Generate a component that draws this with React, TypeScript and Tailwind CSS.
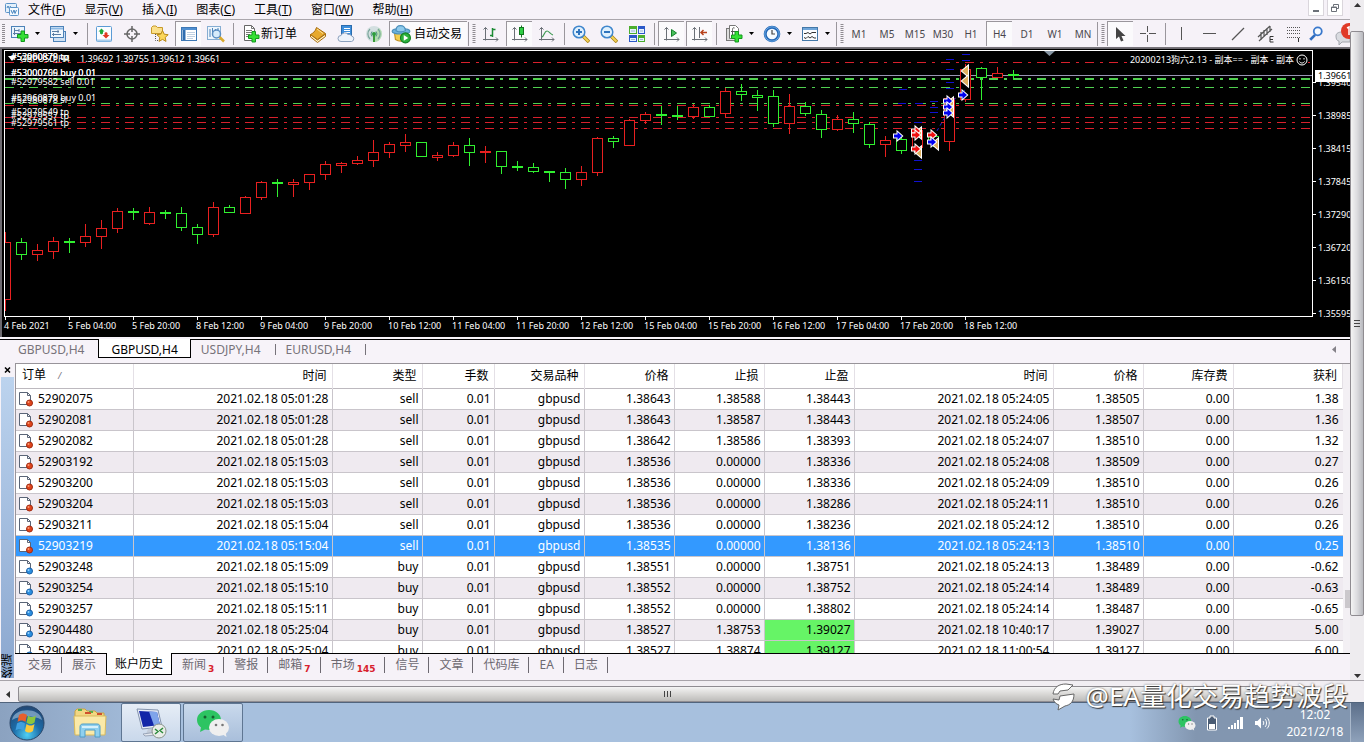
import React, { useState } from "react";

type Candle = [up: boolean, high: number, top: number, bottom: number, low: number];

const R = true;
const G = false;

// one candle every 16px, values are y positions on the chart
const candles: Candle[] = [
  [R, 232, 242, 299, 310],
  [G, 238, 242, 254, 259],
  [R, 244, 250, 254, 260],
  [R, 237, 241, 251, 258],
  [G, 238, 241, 242, 252],
  [R, 224, 236, 242, 246],
  [R, 220, 228, 236, 248],
  [R, 208, 211, 228, 232],
  [G, 208, 211, 212, 219],
  [R, 207, 212, 223, 224],
  [G, 210, 212, 213, 218],
  [G, 207, 213, 227, 230],
  [G, 224, 227, 234, 243],
  [R, 202, 207, 234, 236],
  [G, 205, 207, 212, 212],
  [R, 196, 197, 213, 213],
  [R, 181, 182, 197, 199],
  [G, 179, 182, 183, 196],
  [R, 179, 182, 184, 196],
  [R, 174, 174, 182, 189],
  [R, 161, 164, 174, 179],
  [R, 162, 163, 165, 172],
  [R, 156, 160, 163, 164],
  [R, 140, 152, 160, 166],
  [R, 142, 144, 152, 157],
  [R, 134, 142, 145, 151],
  [G, 142, 142, 156, 156],
  [R, 152, 155, 157, 160],
  [R, 142, 145, 155, 156],
  [G, 138, 145, 152, 165],
  [R, 146, 151, 152, 162],
  [G, 151, 151, 166, 173],
  [G, 161, 166, 167, 170],
  [G, 163, 167, 171, 172],
  [G, 171, 171, 172, 181],
  [G, 168, 172, 179, 188],
  [R, 166, 172, 179, 185],
  [R, 137, 138, 172, 175],
  [G, 136, 138, 141, 147],
  [R, 119, 120, 145, 145],
  [R, 112, 114, 120, 123],
  [G, 106, 114, 115, 124],
  [G, 106, 115, 116, 119],
  [R, 104, 107, 116, 118],
  [G, 105, 107, 116, 116],
  [R, 88, 91, 113, 117],
  [G, 84, 91, 94, 100],
  [G, 90, 95, 97, 110],
  [G, 90, 96, 123, 126],
  [R, 94, 106, 123, 133],
  [G, 102, 106, 113, 115],
  [G, 110, 114, 129, 137],
  [R, 115, 119, 129, 130],
  [G, 112, 119, 123, 132],
  [G, 122, 124, 144, 147],
  [R, 136, 140, 144, 156],
  [G, 137, 139, 150, 153],
  [R, 128, 130, 147, 150],
  [G, 132, 136, 142, 146],
  [R, 97, 98, 141, 150],
  [R, 64, 69, 99, 101],
  [G, 67, 68, 77, 99],
  [R, 67, 73, 77, 77],
  [G, 70, 74, 75, 79],
];

const orderLines = [
  { y: 62, color: "#d8202c", width: 1 },
  { y: 78, color: "#50d050", width: 2 },
  { y: 87, color: "#50d050", width: 1 },
  { y: 103, color: "#50d050", width: 1 },
  { y: 105, color: "#d8202c", width: 1 },
  { y: 117, color: "#d8202c", width: 1 },
  { y: 122, color: "#d8202c", width: 1 },
  { y: 128, color: "#d8202c", width: 1 },
];

const orderLabels = [
  { y: 60, text: "#52960879 tp" },
  { y: 60, text: "#53000878 tp" },
  { y: 76, text: "#53000709 buy 0.01" },
  { y: 76, text: "#53000766 buy 0.01" },
  { y: 85, text: "#52979582 sell 0.01" },
  { y: 101, text: "#52960879 buy 0.01" },
  { y: 103, text: "#52980878 sl" },
  { y: 115, text: "#52979549 tp" },
  { y: 119, text: "#52979557 tp" },
  { y: 126, text: "#52979561 tp" },
];

const blueDashes = [
  [899, 89], [915, 103], [914, 160], [914, 169], [914, 181], [930, 101], [930, 107], [930, 112],
  [946, 59], [946, 69], [946, 82], [946, 88], [962, 54], [962, 60], [898, 103], [914, 122],
];

const arrows: [number, number, string][] = [
  [898, 136, "#0000f0"],
  [916, 131, "#f01010"],
  [916, 135, "#f01010"],
  [916, 149, "#f01010"],
  [932, 135, "#f01010"],
  [932, 142, "#0000f0"],
  [948, 101, "#0000f0"],
  [948, 107, "#0000f0"],
  [948, 113, "#0000f0"],
  [963, 95, "#0000f0"],
];

const exits = [
  [917, 133], [917, 152], [934, 144], [949, 103], [949, 111], [964, 71], [964, 81],
];

const times = [
  "4 Feb 2021", "5 Feb 04:00", "5 Feb 20:00", "8 Feb 12:00", "9 Feb 04:00", "9 Feb 20:00", "10 Feb 12:00", "11 Feb 04:00",
  "11 Feb 20:00", "12 Feb 12:00", "15 Feb 04:00", "15 Feb 20:00", "16 Feb 12:00", "17 Feb 04:00", "17 Feb 20:00", "18 Feb 12:00",
];

const prices = ["1.39540", "1.38985", "1.38415", "1.37845", "1.37290", "1.36720", "1.36150", "1.35595"];

const menus = [
  ["文件", "F"], ["显示", "V"], ["插入", "I"], ["图表", "C"], ["工具", "T"], ["窗口", "W"], ["帮助", "H"],
];

const periods = ["M1", "M5", "M15", "M30", "H1", "H4", "D1", "W1", "MN"];

const columns = ["订单", "时间", "类型", "手数", "交易品种", "价格", "止损", "止盈", "时间", "价格", "库存费", "获利"];

const orders = [
  ["52902075", "05:01:28", "sell", "1.38643", "1.38588", "1.38443", "05:24:05", "1.38505", "1.38"],
  ["52902081", "05:01:28", "sell", "1.38643", "1.38587", "1.38443", "05:24:06", "1.38507", "1.36"],
  ["52902082", "05:01:28", "sell", "1.38642", "1.38586", "1.38393", "05:24:07", "1.38510", "1.32"],
  ["52903192", "05:15:03", "sell", "1.38536", "0.00000", "1.38336", "05:24:08", "1.38509", "0.27"],
  ["52903200", "05:15:03", "sell", "1.38536", "0.00000", "1.38336", "05:24:09", "1.38510", "0.26"],
  ["52903204", "05:15:03", "sell", "1.38536", "0.00000", "1.38286", "05:24:11", "1.38510", "0.26"],
  ["52903211", "05:15:04", "sell", "1.38536", "0.00000", "1.38236", "05:24:12", "1.38510", "0.26"],
  ["52903219", "05:15:04", "sell", "1.38535", "0.00000", "1.38136", "05:24:13", "1.38510", "0.25"],
  ["52903248", "05:15:09", "buy", "1.38551", "0.00000", "1.38751", "05:24:13", "1.38489", "-0.62"],
  ["52903254", "05:15:10", "buy", "1.38552", "0.00000", "1.38752", "05:24:14", "1.38489", "-0.63"],
  ["52903257", "05:15:11", "buy", "1.38552", "0.00000", "1.38802", "05:24:14", "1.38487", "-0.65"],
  ["52904480", "05:25:04", "buy", "1.38527", "1.38753", "1.39027", "10:40:17", "1.39027", "5.00"],
  ["52904483", "05:25:04", "buy", "1.38527", "1.38874", "1.39127", "11:00:54", "1.39127", "6.00"],
];

const terminalTabs = [
  { name: "交易" }, { name: "展示" }, { name: "账户历史" }, { name: "新闻", count: "3" }, { name: "警报" },
  { name: "邮箱", count: "7" }, { name: "市场", count: "145" }, { name: "信号" }, { name: "文章" },
  { name: "代码库" }, { name: "EA" }, { name: "日志" },
];

/* ---------- icons ---------- */

const Icon: React.FC<{ children: React.ReactNode; size?: number }> = ({ children, size = 18 }) => (
  <svg width={size} height={size} viewBox="0 0 18 18" fill="none" className="shrink-0" aria-hidden="true">
    {children}
  </svg>
);

const PlusMark = ({ x, y }: { x: number; y: number }) => (
  <path
    d={`M${x + 4} ${y + 0.5}h3.500v3.500h3.500v3.500h-3.500v3.500h-3.500v-3.500h-3.500v-3.500h3.500z`}
    fill="#34e034"
    stroke="#12981e"
  />
);

const AppIcon = () => (
  <svg width="15" height="15" viewBox="0 0 15 15" fill="none" className="shrink-0" aria-hidden="true">
    <rect x="0.500" y="1.500" width="11" height="9" rx="1" fill="#e4f0fb" stroke="#5d94c8" />
    <path d="M2 6l1-2 1.500 3 1-3" stroke="#4a86c0" />
    <rect x="4.500" y="5.500" width="9" height="8" rx="1" fill="#f4f9fe" stroke="#5d94c8" />
    <path d="M6 8l1.500 3.500 1.500-3.500 1 3.500 1.500-3.500" stroke="#4a86c0" />
  </svg>
);

const NewChartIcon = () => (
  <Icon>
    <rect x="0.500" y="1.500" width="13" height="11" fill="#eaf4fd" stroke="#4d82b8" />
    <path d="M3.500 3v7M2 8.500h9M3 5.500h5M8 4v3" stroke="#5a7da4" />
    <PlusMark x={6} y={5.5} />
  </Icon>
);

const ProfilesIcon = () => (
  <Icon>
    <rect x="4.500" y="6.500" width="12" height="10" fill="#cfe1f4" stroke="#4d82b8" />
    <rect x="1.500" y="1.500" width="13" height="11" fill="#f2f8fe" stroke="#4d82b8" />
    <path d="M2 3.500h12" stroke="#8cb9e4" strokeWidth="2" />
    <path d="M3 9.500h9M4.500 8v3M3 6.500h7M9 5v3" stroke="#5a7da4" />
  </Icon>
);

const MarketWatchIcon = () => (
  <Icon>
    <rect x="1.500" y="1.500" width="15" height="15" rx="1" fill="#fbfdff" stroke="#5b9bd5" />
    <path d="M2 15.500h14" stroke="#a9cdea" strokeWidth="2" />
    <path d="M6.500 3.500l3 3h-1.500v2l-1.500 1-1.500-1v-2h-1.500z" fill="#1fa83a" />
    <path d="M11 13.500l3.500-3.500h-2v-2l-1.500-1-1.500 1v2h-2z" fill="#e03a22" />
  </Icon>
);

const TargetIcon = () => (
  <Icon>
    <circle cx="9" cy="9" r="5" stroke="#666" strokeWidth="1.500" />
    <path d="M9 1v6M9 11v6M1 9h6M11 9h6" stroke="#666" strokeWidth="1.500" />
  </Icon>
);

const NavigatorIcon = () => (
  <Icon>
    <path d="M0.500 2.500l1.500-1.500h3l1.500 1.500h5v6h-11z" fill="#fbe08a" stroke="#c79a2a" />
    <path d="M4.500 9v6.500h4" stroke="#555" strokeDasharray="1 1" />
    <path d="M11.500 5.500l1.700 3.700 4 .500-3 2.700.800 4-3.500-2-3.500 2 .800-4-3-2.700 4-.500z" fill="#fcd75a" stroke="#b98a1a" />
  </Icon>
);

const TerminalIcon = () => (
  <Icon>
    <rect x="1.500" y="2.500" width="15" height="13" fill="#fff" stroke="#3e78b4" />
    <path d="M2 4h14" stroke="#4f8fd0" strokeWidth="2" />
    <path d="M4 5v10" stroke="#2f6db0" strokeWidth="3" />
    <path d="M7 7.500h8M7 9.500h8M7 11.500h8M7 13.500h6" stroke="#bfd0e2" />
  </Icon>
);

const TesterIcon = () => (
  <Icon>
    <rect x="0.500" y="1.500" width="13" height="13" fill="#eef6fd" stroke="#86add2" />
    <path d="M3 4v8M5.500 3v6M8.500 4v3M11 3v5" stroke="#4d82b8" />
    <path d="M12.500 12l4.500 4.500" stroke="#d9a92c" strokeWidth="2.500" />
    <circle cx="9.500" cy="9" r="4" fill="#d6ebfb" stroke="#5a8ec2" strokeWidth="1.500" />
  </Icon>
);

const NewOrderIcon = () => (
  <Icon>
    <path d="M2.500 0.500h7l3 3v12h-10z" fill="#fff" stroke="#666" />
    <path d="M9.500 0.500v3h3M4 5.500h6M4 7.500h6M4 9.500h4M4 11.500h3" stroke="#777" />
    <PlusMark x={6} y={6} />
  </Icon>
);

const BookIcon = () => (
  <Icon>
    <path d="M1.500 9.500l7 5.500 8-6v2.500l-8 6-7-5.500z" fill="#fff3c4" stroke="#a86d10" />
    <path d="M7.500 2.500l9 6-8 6-7-5c2-1 5-3 6-7z" fill="#e7a92c" stroke="#a86d10" />
    <path d="M8 4l6 4.500" stroke="#fbe09a" />
  </Icon>
);

const CloudIcon = () => (
  <Icon>
    <rect x="4.500" y="0.500" width="10" height="10" fill="#3d8fdc" stroke="#2b6cae" />
    <path d="M7 3.500h6M7 5.500h6M7 7.500h6" stroke="#fff" />
    <path d="M4 16.500a3 3 0 010-6 4 4 0 017-1 3 3 0 013.500 1.500 2.800 2.800 0 010 5.500z" fill="#eef3fa" stroke="#8ba0bd" />
  </Icon>
);

const SignalsIcon = () => (
  <Icon>
    <circle cx="9" cy="9" r="8" fill="#d3dfe0" />
    <path d="M9 9v8a8 8 0 005-14" fill="#b3ddb0" />
    <path d="M5 4a7 7 0 000 10M13 4a7 7 0 010 10" stroke="#7aa59b" strokeWidth="1.200" />
    <path d="M7 6.500a4 4 0 000 5M11 6.500a4 4 0 010 5" stroke="#559184" />
    <path d="M9 9v8" stroke="#3a9c3a" strokeWidth="2" />
    <circle cx="9" cy="9" r="2" fill="#2f9e3f" />
  </Icon>
);

const AutoTradeIcon = () => (
  <Icon size={20}>
    <path d="M3 7l1 7c3 2 7 2 9 0l2-7z" fill="#f5cf4d" stroke="#bf9024" />
    <ellipse cx="9" cy="6.500" rx="8" ry="2.500" fill="#6fb4dc" stroke="#4a8fbb" />
    <path d="M4.500 6c0-6 8-6 8.500 0-2 1.500-6 1.500-8.500 0z" fill="#8ecbec" stroke="#4a8fbb" />
    <circle cx="13" cy="12.500" r="4.500" fill="#2bb13b" stroke="#138024" />
    <path d="M11.500 10l4 2.500-4 2.500z" fill="#fff" />
  </Icon>
);

const Axes = () => (
  <path d="M3.500 2.500v13M1 14.500h15M1.500 4.500l2-2 2 2M14 12.500l2 2-2 2" stroke="#6a6f76" />
);

const BarChartIcon = () => (
  <Icon>
    <Axes />
    <path d="M10.500 3v9M10.500 4.500h3M8 10.500h2.500" stroke="#1d8a34" strokeWidth="1.500" />
  </Icon>
);

const CandleChartIcon = () => (
  <Icon>
    <Axes />
    <path d="M10.500 0.500v12" stroke="#12761f" />
    <rect x="8.500" y="2.500" width="4" height="7" fill="#2fce45" stroke="#12761f" />
  </Icon>
);

const LineChartIcon = () => (
  <Icon>
    <Axes />
    <path d="M4 12c2-1 2.500-6 5-6 2 0 3 3 6 4" stroke="#3f9a54" strokeWidth="1.200" />
  </Icon>
);

const ZoomIcon = ({ plus }: { plus?: boolean }) => (
  <Icon>
    <path d="M11 11l6 6" stroke="#a98114" strokeWidth="3.500" />
    <path d="M11 11l5.500 5.500" stroke="#f3d255" strokeWidth="2" />
    <circle cx="7" cy="7" r="5.800" fill="#dff0fd" stroke="#3f86cc" strokeWidth="1.500" />
    <path d={plus ? "M7 4v6M4 7h6" : "M4 7h6"} stroke="#2f74bd" strokeWidth="2" />
  </Icon>
);

const TileIcon = () => (
  <Icon>
    <rect x="1" y="1" width="8" height="8" fill="#4cae2e" />
    <rect x="10" y="1" width="7" height="8" fill="#2b58c8" />
    <rect x="1" y="10" width="8" height="7" fill="#2b58c8" />
    <rect x="10" y="10" width="7" height="7" fill="#4cae2e" />
    <path d="M2 4h6v4H2zM11 4h5v4h-5zM2 13h6v3H2zM11 13h5v3h-5z" fill="#e6f3ff" />
    <path d="M3 6h4M12 6h3M3 14.500h4M12 14.500h3" stroke="#9db6d4" />
  </Icon>
);

const AutoScrollIcon = () => (
  <Icon>
    <Axes />
    <path d="M8.500 4.500l5 3.500-5 3.500z" fill="#49c05c" stroke="#15802a" />
  </Icon>
);

const ShiftIcon = () => (
  <Icon>
    <Axes />
    <path d="M8.500 2v11" stroke="#6a6f76" />
    <path d="M16 7.500h-6M12.500 5l-2.500 2.500 2.500 2.500" stroke="#b8421c" strokeWidth="1.500" />
  </Icon>
);

const IndicatorsIcon = () => (
  <Icon>
    <rect x="1.500" y="3.500" width="9" height="12" fill="#ddd" stroke="#777" />
    <path d="M4.500 0.500h6l3 3v10h-9z" fill="#fff" stroke="#777" />
    <path d="M9.500 3c-2-1-2 1-2 3v5M6 6.500h4" stroke="#555" />
    <PlusMark x={6} y={6} />
  </Icon>
);

const ClockIcon = () => (
  <Icon>
    <circle cx="9" cy="9" r="6.800" fill="#f4faff" stroke="#2468b8" strokeWidth="3" />
    <circle cx="9" cy="9" r="7.200" stroke="#6aa8e2" />
    <path d="M9 5V9h3" stroke="#444" strokeWidth="1.200" />
  </Icon>
);

const TemplateIcon = () => (
  <Icon>
    <rect x="1.500" y="2.500" width="15" height="13" fill="#fbfdff" stroke="#4478a8" />
    <path d="M2 4h14" stroke="#6fa6da" strokeWidth="2" />
    <path d="M3 8.500h2l2-1 2 1.500 2-1.500h4M3 12.500l2 1 2-2 2 1.500 2-1.500 2 1.500h2" stroke="#333" />
  </Icon>
);

const CursorIcon = () => (
  <Icon>
    <path d="M4 2v12l3-2.500 2 5 2.500-1-2-4.500h4z" fill="#444" />
  </Icon>
);

const CrossIcon = () => (
  <Icon>
    <path d="M8.500 1v6M8.500 10v7M1 8.500h6M10 8.500h7" stroke="#555" />
  </Icon>
);

const ChannelIcon = () => (
  <Icon>
    <path d="M1 12L13 1M2 16L15 4M4 7v8M7 5v7M10 3v7M13 1v6" stroke="#555" strokeWidth="1.200" />
    <path d="M16.500 11.500h-3.500v5.500h3.500M13 14.500h3" stroke="#333" />
  </Icon>
);

const FiboIcon = () => (
  <Icon>
    <path d="M2 2.500h13M2 5.500h13M2 8.500h13M2 12.500h13" stroke="#555" strokeDasharray="1 1" />
    <path d="M13.500 13v4" stroke="#333" />
  </Icon>
);

const SearchIcon = () => (
  <Icon size={16}>
    <path d="M8 10l-5.500 5.500" stroke="#2f6dc0" strokeWidth="3" />
    <circle cx="11" cy="6" r="4.500" fill="#f5faff" stroke="#3a78cc" strokeWidth="2" />
  </Icon>
);

const OrderIcon = ({ sell }: { sell: boolean }) => (
  <svg width="15" height="16" viewBox="0 0 15 16" fill="none" className="shrink-0" aria-hidden="true">
    <path d="M0.500 1.500h8l3 3v9h-11z" fill="#fff" stroke="#5a6577" />
    <path d="M8.500 1.500v3h3" stroke="#5a6577" />
    <circle cx="10.500" cy="12" r="3" fill={sell ? "#e0451c" : "#2b8fe0"} stroke={sell ? "#a02a10" : "#1b60a8"} />
    <circle cx="9.500" cy="11" r="1" fill={sell ? "#ff9a70" : "#9ad4ff"} />
  </svg>
);

const WeChatIcon = ({ size }: { size: number }) => (
  <svg width={size} height={size} viewBox="0 0 34 34" fill="none" aria-hidden="true">
    <path d="M13 4C6 4 1 8.500 1 14c0 3 1.500 5.500 4 7.500L4 26l5-2.500c9 2 16-2.500 16-9.500 0-5.500-5-10-12-10z" fill="#2dc462" />
    <ellipse cx="23" cy="21.500" rx="10" ry="8.500" fill="#efefef" />
    <path d="M26 28l4.500 3-1-5z" fill="#efefef" />
    <circle cx="9" cy="11" r="1.500" fill="#17602f" />
    <circle cx="17" cy="11" r="1.500" fill="#17602f" />
    <circle cx="20" cy="19" r="1.300" fill="#777" />
    <circle cx="26.500" cy="19" r="1.300" fill="#777" />
  </svg>
);

/* ---------- toolbar pieces ---------- */

const Tool: React.FC<{ label: string; on?: boolean; children: React.ReactNode }> = ({ label, on, children }) => (
  <button aria-label={label} className="flex h-[26px] w-7 shrink-0 items-center justify-center">
    <span
      className={
        on
          ? "flex h-[25px] w-[26px] items-center justify-center border-l border-t border-[#9a969c] bg-[#fbfafc]"
          : "flex h-[25px] w-[26px] items-center justify-center"
      }
    >
      {children}
    </span>
  </button>
);

const DropTool: React.FC<{ label: string; children: React.ReactNode }> = ({ label, children }) => (
  <button aria-label={label} className="flex h-[26px] w-[38px] shrink-0 items-center gap-1.5 pl-[3px]">
    {children}
    <svg width="5" height="3" viewBox="0 0 5 3" aria-hidden="true">
      <path d="M0 0h5L2.500 3z" fill="#000" />
    </svg>
  </button>
);

const Sep = () => (
  <div className="flex h-[22px] w-1.5 shrink-0 justify-center">
    <div className="w-px bg-[#9a969c]" />
  </div>
);

const Grip = () => (
  <div className="flex h-6 w-[9px] shrink-0 items-center gap-[3px] border-l border-[#9a969c]">
    <svg width="8" height="20" viewBox="0 0 8 20" aria-hidden="true">
      <path d="M5 0v20" stroke="#8f8b91" strokeWidth="3" strokeDasharray="1 1" />
    </svg>
  </div>
);

const Toolbar = () => (
  <div className="flex h-7 items-center overflow-hidden border-b border-[#77747a] bg-[#f6f2f8]">
    <div className="flex h-6 w-2 shrink-0 items-center">
      <svg width="8" height="20" viewBox="0 0 8 20" aria-hidden="true">
        <path d="M3.500 0v20" stroke="#8f8b91" strokeWidth="3" strokeDasharray="1 1" />
      </svg>
    </div>
    <DropTool label="新图表"><NewChartIcon /></DropTool>
    <DropTool label="图表组合"><ProfilesIcon /></DropTool>
    <Sep />
    <Tool label="市场报价"><MarketWatchIcon /></Tool>
    <Tool label="数据窗口"><TargetIcon /></Tool>
    <Tool label="导航"><NavigatorIcon /></Tool>
    <Tool label="终端" on><TerminalIcon /></Tool>
    <Tool label="策略测试"><TesterIcon /></Tool>
    <Sep />
    <button className="flex h-[26px] w-[68px] shrink-0 items-center gap-px pl-1.5 whitespace-nowrap">
      <NewOrderIcon />
      新订单
    </button>
    <Tool label="MetaEditor"><BookIcon /></Tool>
    <Tool label="VPS"><CloudIcon /></Tool>
    <Tool label="信号"><SignalsIcon /></Tool>
    <button className="mx-px flex h-[25px] w-[78px] shrink-0 items-center gap-[3px] border-l border-t border-[#9a969c] bg-[#fbfafc] pl-px whitespace-nowrap">
      <AutoTradeIcon />
      自动交易
    </button>
    <Grip />
    <Tool label="柱状图"><BarChartIcon /></Tool>
    <Tool label="蜡烛图" on><CandleChartIcon /></Tool>
    <Tool label="折线图"><LineChartIcon /></Tool>
    <Sep />
    <Tool label="放大"><ZoomIcon plus /></Tool>
    <Tool label="缩小"><ZoomIcon /></Tool>
    <Tool label="平铺窗口"><TileIcon /></Tool>
    <Sep />
    <Tool label="自动滚动" on><AutoScrollIcon /></Tool>
    <Tool label="图表平移" on><ShiftIcon /></Tool>
    <Sep />
    <div className="flex shrink-0 pl-[3px]">
      <DropTool label="指标"><IndicatorsIcon /></DropTool>
      <DropTool label="时间周期"><ClockIcon /></DropTool>
      <DropTool label="模板"><TemplateIcon /></DropTool>
    </div>
    <Grip />
    {periods.map((p) => (
      <Tool key={p} label={p} on={p === "H4"}>
        <span className="text-[10px] leading-3 text-[#4a474d]">{p}</span>
      </Tool>
    ))}
    <Grip />
    <Tool label="光标" on><CursorIcon /></Tool>
    <Tool label="十字线"><CrossIcon /></Tool>
    <Sep />
    <Tool label="垂直线"><Icon><path d="M8.500 2v13" stroke="#555" /></Icon></Tool>
    <Tool label="水平线"><Icon><path d="M2 8.500h13" stroke="#555" /></Icon></Tool>
    <Tool label="趋势线"><Icon><path d="M3 15L15 3" stroke="#555" strokeWidth="1.200" /></Icon></Tool>
    <Tool label="通道"><ChannelIcon /></Tool>
    <Tool label="斐波那契"><FiboIcon /></Tool>
    <button aria-label="搜索" className="flex w-5 shrink-0 items-center"><SearchIcon /></button>
    <button aria-label="通知" className="ml-auto shrink-0">
      <svg width="16" height="24" viewBox="0 0 16 24" aria-hidden="true">
        <path d="M2 14c0-3 3-4 6-4h8v10H8l-3 3v-4c-2 0-3-2-3-5z" fill="#d9dbe0" stroke="#a4a7ae" />
        <circle cx="15" cy="9" r="8" fill="#e03a28" />
        <path d="M13 6l2-1v8" stroke="#fff" strokeWidth="1.500" fill="none" />
      </svg>
    </button>
  </div>
);

/* ---------- chart ---------- */

const Chart = () => (
  <div className="relative flex h-[289px] shrink-0 overflow-hidden border-l-2 border-t border-[#6d6a70] bg-black pl-0.5 pt-px text-[9px] leading-3 text-white">
    <div className="flex min-w-0 flex-1 flex-col">
      <div className="h-[267px] border border-white">
        <svg width="100%" height="100%" className="block overflow-hidden">
          <g transform="translate(-5 -51)" shapeRendering="crispEdges">
            {orderLines.map((l) => (
              <line key={l.y} x1="5" x2="110%" y1={l.y + l.width / 2} y2={l.y + l.width / 2} stroke={l.color} strokeWidth={l.width} strokeDasharray="9 6 3 6" />
            ))}
            <line x1="5" x2="110%" y1="75.5" y2="75.5" stroke="#9a94b4" />
            {blueDashes.map(([x, y]) => (
              <rect key={`${x}-${y}`} x={x} y={y} width="8" height="1" fill="#1010d0" />
            ))}
            {candles.map(([up, high, top, bottom, low], i) => {
              const x = 5 + i * 16;
              const color = up ? "#e82020" : "#30f030";
              return (
                <g key={i}>
                  <rect x={x} y={high} width="1" height={low - high + 1} fill={color} />
                  <rect x={x - 4.5} y={top + 0.5} width="10" height={bottom - top} fill="#000" stroke={color} />
                </g>
              );
            })}
          </g>
          <g transform="translate(-5 -51)">
            <path d="M934 136L948 112M949 104L965 90" stroke="#2020e0" strokeDasharray="3 3" />
            {exits.map(([x, y]) => (
              <path key={`${x}-${y}`} d={`M${x - 2} ${y}l6-5v10z`} fill="#dfb060" stroke="#fff" strokeWidth="2" paintOrder="stroke" />
            ))}
            {arrows.map(([x, y, color]) => (
              <path key={`${x}-${y}`} d={`M${x - 4} ${y - 1.5}h3.500v-2.500l4.500 4-4.500 4v-2.500h-3.500z`} fill={color} stroke="#fff" strokeWidth="2" paintOrder="stroke" />
            ))}
            <path d="M1044 51h11l-5.500 5z" fill="#8796a4" />
            <path d="M8 56h8l-4 5z" fill="#fff" />
            <g fill="#fff">
              {orderLabels.map((l) => (
                <text key={l.text} x="11" y={l.y}>{l.text}</text>
              ))}
              <text x="20" y="62">GBPUSD,H4</text>
              <text x="80" y="62">1.39692 1.39755 1.39612 1.39661</text>
            </g>
          </g>
        </svg>
      </div>
      <div className="flex">
        {times.map((t) => (
          <div key={t} className="w-16 shrink-0 whitespace-nowrap">
            <div className="ml-px h-[3px] w-px bg-white" />
            {t}
          </div>
        ))}
      </div>
    </div>
    <div className="flex w-[37px] shrink-0 flex-col overflow-hidden pt-4">
      {prices.map((p) => (
        <div key={p} className="flex h-[33px] shrink-0 items-center gap-0.5">
          <span className="h-px w-[3px] shrink-0 bg-white" />
          {p}
        </div>
      ))}
    </div>
    <span className="absolute right-0 top-[21px] w-[35px] overflow-hidden bg-white pl-[3px] text-black">1.39661</span>
    <div className="absolute right-[42px] top-[5px] flex items-center gap-0.5 bg-black whitespace-nowrap">
      20200213狗六2.13 - 副本== - 副本 - 副本
      <svg width="12" height="12" viewBox="0 0 12 12" fill="none" stroke="#fff" aria-hidden="true">
        <circle cx="6" cy="6" r="5" />
        <path d="M3.500 7.500c1 2 4 2 5 0M4 4v1.500M8 4v1.500" />
      </svg>
    </div>
  </div>
);

const ChartTabs = () => (
  <div className="h-[26px] shrink-0 bg-[#f7f3f9] pt-0.5">
    <nav className="flex h-5 border-t border-black pl-2 text-[#77737a]">
      <button className="pl-2.5 pr-3.5">GBPUSD,H4</button>
      <button className="-mt-px h-[19px] border border-t-0 border-black bg-white px-3 pt-1 leading-3 text-black">GBPUSD,H4</button>
      <button className="my-1 border-r border-[#77737a] pl-2.5 pr-3.5 leading-3">USDJPY,H4</button>
      <button className="my-1 border-r border-[#77737a] pl-2.5 pr-3.5 leading-3">EURUSD,H4</button>
      <svg width="4" height="7" viewBox="0 0 4 7" className="ml-auto mr-3.5 mt-1.5" aria-hidden="true">
        <path d="M4 0v7L0 3.500z" fill="#858189" />
      </svg>
    </nav>
  </div>
);

/* ---------- terminal ---------- */

const History = () => {
  const [selected, setSelected] = useState("52903219");

  return (
    <table className="w-full table-fixed border-collapse whitespace-nowrap">
      <colgroup>
        <col className="w-[117px]" />
        <col className="w-[199px]" />
        <col className="w-[90px]" />
        <col className="w-[72px]" />
        <col className="w-[90px]" />
        <col className="w-[90px]" />
        <col className="w-[90px]" />
        <col className="w-[90px]" />
        <col className="w-[199px]" />
        <col className="w-[90px]" />
        <col className="w-[90px]" />
        <col />
      </colgroup>
      <thead>
        <tr className="h-6 border-b border-[#bdb9bf]">
          {columns.map((c, i) => (
            <th
              key={i}
              scope="col"
              className={i === 0 ? "border-r border-[#e4e0e6] pl-1.5 text-left font-normal" : "border-r border-[#e4e0e6] pr-[5px] text-right font-normal"}
            >
              {c}
              {i === 0 && <span className="pl-3 text-[9px] text-[#77737a] italic">/</span>}
            </th>
          ))}
        </tr>
      </thead>
      <tbody>
        {orders.map(([id, opened, type, price, sl, tp, closed, closePrice, profit]) => {
          const hitTp = tp === closePrice;
          const cells = [`2021.02.18 ${opened}`, type, "0.01", "gbpusd", price, sl, tp, `2021.02.18 ${closed}`, closePrice, "0.00", profit];
          return (
            <tr
              key={id}
              onClick={() => setSelected(id)}
              className={
                id === selected
                  ? "h-[21px] border-b border-[#c9c5cb] bg-[#3399ff] text-white"
                  : "h-[21px] border-b border-[#c9c5cb] odd:bg-white even:bg-[#efeaf0]"
              }
            >
              <td className="border-r border-[#c9c5cb] pl-[3px]">
                <div className="flex items-center gap-1">
                  <OrderIcon sell={type === "sell"} />
                  {id}
                </div>
              </td>
              {cells.map((c, i) => (
                <td
                  key={i}
                  className={
                    i === 6 && hitTp
                      ? "border-r border-[#c9c5cb] bg-[#66f466] pr-[3px] text-right"
                      : i === 10
                        ? "pr-1 text-right"
                        : "border-r border-[#c9c5cb] pr-[3px] text-right"
                  }
                >
                  {c}
                </td>
              ))}
            </tr>
          );
        })}
      </tbody>
    </table>
  );
};

const Terminal = () => {
  const [tab, setTab] = useState("账户历史");

  return (
    <section className="flex min-h-0 flex-1 bg-[#f6f2f8]">
      <div className="flex w-[15px] shrink-0 flex-col items-center pb-0.5">
        <button aria-label="关闭" className="flex h-3.5 items-center">
          <svg width="7" height="6" viewBox="0 0 7 6" aria-hidden="true">
            <path d="M1 0.500l5 5M6 0.500l-5 5" stroke="#000" strokeWidth="1.500" />
          </svg>
        </button>
        <div className="flex w-[13px] flex-1 items-end justify-center bg-linear-to-b from-[#bcd3ee] to-[#8ba7cf]">
          <span className="rotate-180 text-[12px] leading-[13px] [writing-mode:vertical-rl]">终端</span>
        </div>
      </div>
      <div className="flex min-w-0 flex-1 flex-col">
        <div className="flex min-h-0 flex-1 overflow-hidden border-l border-t border-[#98949a]">
          <div className="min-w-0 flex-1 overflow-hidden bg-white">
            <History />
          </div>
          <div className="flex w-[7px] shrink-0 flex-col bg-[#f3f0f4]">
            <div className="flex-[226]" />
            <div className="ml-0.5 flex-[18] bg-[#cbc8cc]" />
            <div className="flex-[45]" />
          </div>
        </div>
        <nav className="flex h-[27px] shrink-0 border-t border-black pl-[3px] text-[#6d6971]">
          {terminalTabs.map(({ name, count }) => (
            <button
              key={name}
              onClick={() => setTab(name)}
              className={
                name === tab
                  ? "-mt-px h-[22px] border border-t-0 border-black bg-white px-2 leading-5 text-black"
                  : name === "展示"
                    ? "mt-[3px] h-4 px-2.5 leading-4"
                    : "mt-[3px] flex h-4 border-r border-[#6d6971] pl-2.5 pr-[9px] leading-4"
              }
            >
              {name}
              {count && <span className="pl-0.5 pt-1.5 font-['DejaVu_Sans'] text-[9px] leading-3 font-bold text-[#d8202c]">{count}</span>}
            </button>
          ))}
        </nav>
      </div>
    </section>
  );
};

/* ---------- frame scroll bars ---------- */

const VerticalScroll = () => (
  <div className="flex w-3.5 shrink-0 flex-col items-center bg-[#eeecef]">
    <svg width="14" height="10" viewBox="0 0 14 10" aria-hidden="true">
      <path d="M4 7h7L7.500 3z" fill="#333" />
    </svg>
    <div className="h-[21px]" />
    <div className="flex w-full flex-[585] flex-col items-center justify-center gap-0.5 rounded-xs border border-[#8f8c91] bg-linear-to-r from-[#f4f4f4] via-[#dcdcdf] to-[#b9babf]">
      <div className="h-px w-1.5 bg-[#444]" />
      <div className="h-px w-1.5 bg-[#444]" />
      <div className="h-px w-1.5 bg-[#444]" />
    </div>
    <div className="flex-[54]" />
    <svg width="14" height="10" viewBox="0 0 14 10" aria-hidden="true">
      <path d="M4 4h7L7.500 8z" fill="#333" />
    </svg>
  </div>
);

const HorizontalScroll = () => (
  <div className="flex h-[22px] shrink-0 items-end border-t border-[#a7a3a9] bg-[#f1eef2]">
    <svg width="18" height="15" viewBox="0 0 18 15" className="shrink-0" aria-hidden="true">
      <path d="M10 4v7L6 7.500z" fill="#333" />
    </svg>
    <div className="flex h-4 flex-1 items-center justify-center gap-0.5 rounded-xs border border-[#8f8c91] bg-linear-to-b from-[#f4f4f4] via-[#d9d8d6] to-[#bdbcba]">
      <div className="h-1.5 w-px bg-[#444]" />
      <div className="h-1.5 w-px bg-[#444]" />
      <div className="h-1.5 w-px bg-[#444]" />
    </div>
    <div className="w-12 shrink-0" />
  </div>
);

/* ---------- taskbar ---------- */

const StartOrb = () => (
  <svg width="36" height="36" viewBox="0 0 36 36" aria-hidden="true">
    <defs>
      <radialGradient id="orb" cx="50%" cy="85%" r="80%">
        <stop offset="0" stopColor="#4fd0f4" />
        <stop offset="0.5" stopColor="#1c6ca8" />
        <stop offset="1" stopColor="#224a78" />
      </radialGradient>
    </defs>
    <circle cx="18" cy="18" r="17" fill="url(#orb)" stroke="#2a4668" />
    <path d="M3 15C5 2 31 2 33 15c-9-5-21-5-30 0z" fill="#a8c4de" opacity="0.6" />
    <path d="M10 10c3-2 5-2 8 0l-1.500 7c-3-2-5-2-8 0z" fill="#e8602c" />
    <path d="M19 10.500c3 2 5 2 8 0l-1.500 7c-3 2-5 2-8 0z" fill="#8cc63e" />
    <path d="M8 18.500c3-2 5-2 8 0l-1.500 7c-3-2-5-2-8 0z" fill="#3f9fe0" />
    <path d="M17.500 19c3 2 5 2 8 0l-1.500 7c-3 2-5 2-8 0z" fill="#fbc93c" />
  </svg>
);

const ExplorerIcon = () => (
  <svg width="34" height="32" viewBox="0 0 34 32" fill="none" aria-hidden="true">
    <path d="M2 4l2-2h8l2 2h8l2 2h7v20H2z" fill="#f2d782" stroke="#c9a544" />
    <path d="M5 3h4M16 5h4M24 7h4" stroke="#58b04a" strokeWidth="2" />
    <path d="M12 6h6M24 7h5" stroke="#d0502c" strokeWidth="2" />
    <path d="M1 9h32l-1 19H2z" fill="#fae9a8" stroke="#d8b95c" />
    <path d="M7 30V20c0-2 1-3 3-3h14c2 0 3 1 3 3v10h-5v-7H12v7z" fill="#8fd0ee" stroke="#4d9cc8" />
    <path d="M9 20h16" stroke="#d5f0fc" strokeWidth="2" />
  </svg>
);

const RemoteIcon = () => (
  <svg width="34" height="32" viewBox="0 0 34 32" fill="none" aria-hidden="true">
    <path d="M3 2l21 1 4 17-20 2z" fill="#e8eef8" stroke="#8393ad" />
    <path d="M5 4l18 1 3 13-17 2z" fill="#1226a8" />
    <path d="M15 4.500l8 .500 3 13-6 .500z" fill="#7fa4ea" />
    <path d="M14 22l8-1 2 4-12 2z" fill="#c3cbd8" />
    <path d="M9 27l14-2v3l-12 1z" fill="#e3e7ee" stroke="#9aa5b8" />
    <circle cx="25" cy="24" r="7" fill="#e9ede8" stroke="#8b948c" />
    <path d="M21 22l3 2.500-3 2.500M29 21l-3 2.500 3 2.500" stroke="#2b8a3a" strokeWidth="1.500" />
  </svg>
);

const Taskbar = () => (
  <footer className="flex h-10 shrink-0 items-center border-t border-[#51647c] bg-linear-to-r from-[#8ba2c0] via-[#a7c0de] via-12% to-[#a7c0de]">
    <button aria-label="开始" className="ml-[9px] shrink-0"><StartOrb /></button>
    <button aria-label="资源管理器" className="ml-7 shrink-0"><ExplorerIcon /></button>
    <button aria-label="远程桌面" className="ml-3.5 flex h-[39px] w-[60px] shrink-0 items-center justify-center rounded-xs border border-[#5f7692] bg-linear-to-b from-[#e6edf6] to-[#c9d8eb]">
      <RemoteIcon />
    </button>
    <button aria-label="微信" className="ml-0.5 flex h-[39px] w-[60px] shrink-0 items-center justify-center rounded-xs border border-[#5f7692] bg-linear-to-b from-[#c9d9ec] to-[#a9bfdb]">
      <WeChatIcon size={34} />
    </button>
    <div className="ml-auto flex h-full items-center gap-2.5 bg-linear-to-r from-transparent via-[#8296b0] via-30% to-[#8296b0] pl-12 text-white">
      <WeChatIcon size={18} />
      <svg width="12" height="16" viewBox="0 0 12 16" fill="none" aria-hidden="true">
        <path d="M4 1h4v2h2.500v12h-9V3H4z" fill="#4a5c74" stroke="#fff" />
        <path d="M3 9h6v5H3z" fill="#fff" />
      </svg>
      <svg width="16" height="14" viewBox="0 0 16 14" aria-hidden="true">
        <path d="M0 11h2v2H0zM3 9h2v4H3zM6 7h2v6H6zM9 4h2v9H9zM12 1h3v12h-3z" fill="#fff" />
      </svg>
      <svg width="16" height="14" viewBox="0 0 16 14" fill="none" aria-hidden="true">
        <path d="M1 5h2.500L7 1.500v11L3.500 9H1z" fill="#fff" />
        <path d="M9 5c1 1 1 3 0 4M11 3c2 2 2 6 0 8M13 1.500c3 3 3 8 0 11" stroke="#fff" />
      </svg>
      <time className="w-[70px] text-center leading-[17px]">
        12:02
        <br />
        2021/2/18
      </time>
    </div>
    <button aria-label="显示桌面" className="h-full w-3.5 shrink-0 border-l border-[#a9b8cb] bg-linear-to-b from-[#5c6f8a] to-[#8fa2bb]" />
  </footer>
);

const Watermark = () => (
  <div className="pointer-events-none absolute bottom-7 right-4 flex items-center gap-2.5 text-[26px] leading-9 text-white [text-shadow:1px_1px_1px_#333,0_0_2px_#666]">
    <svg width="26" height="30" viewBox="0 0 26 30" aria-hidden="true">
      <path d="M3 13C4 6 9 3 16 3l7 1-5 5-8 1-2 3z" fill="#fff" stroke="#666" />
      <path d="M10 15l14-2c0 8-4 11-9 12l-7 4 1-5c-3-1-5-3-6-6l6 1z" fill="#fff" stroke="#666" />
    </svg>
    @EA量化交易趋势波段
  </div>
);

const App: React.FC = () => {
  return (
    <div className="relative flex h-screen min-h-[640px] flex-col overflow-hidden bg-[#f6f2f8] font-['Noto_Sans','Noto_Sans_CJK_SC',sans-serif] text-[12px] leading-[18px] text-black">
      <div className="flex min-h-0 flex-1">
        <main className="flex min-w-0 flex-1 flex-col">
          <header className="flex h-5 shrink-0 items-center border-b border-[#aaa6ac] pl-[5px]">
            <AppIcon />
            <nav className="flex gap-[19px] pl-2">
              {menus.map(([name, key]) => (
                <button key={key} className="whitespace-nowrap">
                  {name}(<u>{key}</u>)
                </button>
              ))}
            </nav>
            <div className="ml-auto flex gap-[3px] self-start pr-[7px]">
              <button aria-label="最小化" className="flex h-4 w-4 items-center justify-center border border-t-0 border-[#dad6dc] bg-white">
                <svg width="6" height="8" viewBox="0 0 6 8" aria-hidden="true"><path d="M0 6h6v2H0z" fill="#6b7078" /></svg>
              </button>
              <button aria-label="还原" className="flex h-4 w-4 items-center justify-center border border-t-0 border-[#dad6dc] bg-white">
                <svg width="8" height="8" viewBox="0 0 8 8" fill="none" stroke="#6b7078" aria-hidden="true">
                  <path d="M2.500 2.500v-2h5v4h-2M0.500 3h5v4.500h-5zM0 3.500h6" />
                </svg>
              </button>
            </div>
          </header>
          <Toolbar />
          <Chart />
          <ChartTabs />
          <Terminal />
        </main>
        <VerticalScroll />
      </div>
      <HorizontalScroll />
      <Taskbar />
      <Watermark />
    </div>
  );
};

export default App;
